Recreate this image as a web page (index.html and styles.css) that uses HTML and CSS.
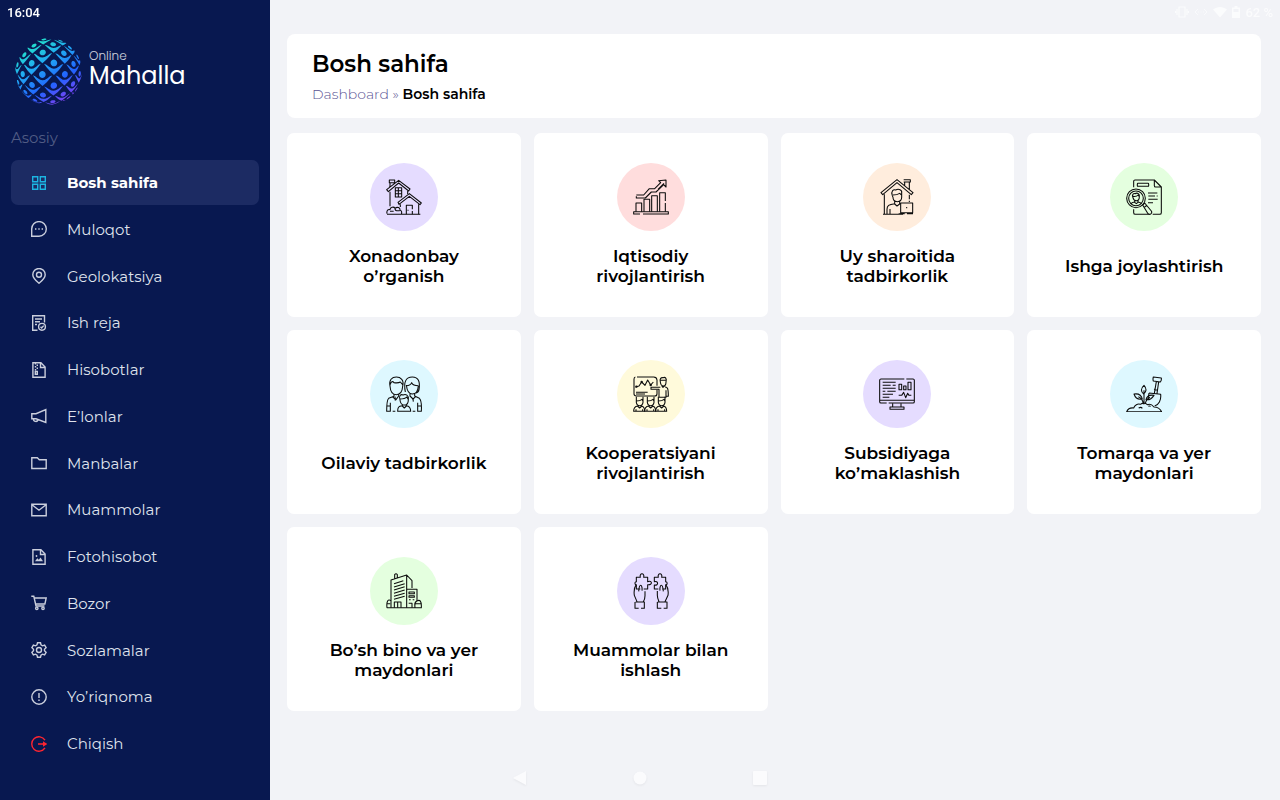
FILE: index.html
```html
<!DOCTYPE html>
<html lang="uz">
<head>
<meta charset="utf-8">
<meta name="viewport" content="width=device-width, initial-scale=1.0">
<title>Online Mahalla</title>
<link rel="stylesheet" href="styles.css">
</head>
<body>
<div class="status-bar">
  <span class="clock">16:04</span>
  <div class="status-icons">
    <svg width="14" height="12" viewBox="0 0 14 12"><path d="M4 1h6v10H4zM2 3v6M12 3v6M.5 5v2M13.500 5v2" fill="none" stroke="currentColor" stroke-width="1.200"/></svg>
    <svg class="faint" width="14" height="12" viewBox="0 0 14 12"><path d="M4 3 1 6l3 3M10 3l3 3-3 3M4 6h1M6.500 6h1M9 6h1" fill="none" stroke="currentColor"/></svg>
    <svg width="14" height="12" viewBox="0 0 14 12"><path d="M0 3.500C4 0 10 0 14 3.500L7 11.500z" fill="currentColor"/></svg>
    <svg width="8" height="12" viewBox="0 0 8 12"><path d="M2.500 0h3v1.500H8V12H0V1.500h2.500zM1.500 3v3h5V3z" fill="currentColor" fill-rule="evenodd"/></svg>
    <span>62 %</span>
  </div>
</div>

<div class="layout">
  <aside class="sidebar">
    <a class="logo" href="#">
      <svg class="globe" viewBox="-33 -33 66 66" aria-hidden="true">
        <defs>
          <linearGradient id="globeFill" x1="-18" y1="-28" x2="18" y2="29" gradientUnits="userSpaceOnUse">
            <stop offset="0" stop-color="#22e3c9"/>
            <stop offset=".35" stop-color="#20a8f4"/>
            <stop offset=".68" stop-color="#2263ff"/>
            <stop offset="1" stop-color="#8040f0"/>
          </linearGradient>
        </defs>
        <path id="globePattern" fill="url(#globeFill)"/>
      </svg>
      <span class="logo-text"><span class="logo-small">Online</span><span class="logo-big">Mahalla</span></span>
    </a>
    <p class="menu-title">Asosiy</p>
    <nav class="menu">
      <a class="menu-item active" href="#">
        <svg viewBox="0 0 16 16"><path d="M1.700 1.700h5v5h-5zM9.300 1.700h5v5h-5zM1.700 9.300h5v5h-5zM9.300 9.300h5v5h-5z"/></svg>
        Bosh sahifa</a>
      <a class="menu-item" href="#">
        <svg viewBox="0 0 16 16"><path d="M.7 15.200V8A7.300 7.300 0 1 1 8 15.200z"/><path d="M4 8h1.400M7.300 8h1.400M10.600 8H12" stroke-width="1.500"/></svg>
        Muloqot</a>
      <a class="menu-item" href="#">
        <svg viewBox="0 0 16 16"><path d="M8 15.300C4 12 1.800 9.400 1.800 6.700a6.200 6.200 0 0 1 12.400 0C14.200 9.400 12 12 8 15.300z"/><circle cx="8" cy="6.700" r="2.500"/></svg>
        Geolokatsiya</a>
      <a class="menu-item" href="#">
        <svg viewBox="0 0 16 16"><path d="M6.500 15.200H1.700V.8h11.800v6.700M4 4h7M4 6.800h5M4 9.500h2"/><circle cx="11" cy="11.800" r="3.400"/><path d="m9.500 11.800 1.200 1.200 2-2.400"/></svg>
        Ish reja</a>
      <a class="menu-item" href="#">
        <svg viewBox="0 0 16 16"><path d="M1.900.8h8l4.200 4.300v10.100H1.900zM9.500.8v4.700h4.600"/><path d="M4.500 1v1.500M6.300 2.500V4M4.500 4v1.500M6.300 5.500V7M4.500 7v1.500M4.300 9.500h2v2.800h-2z"/></svg>
        Hisobotlar</a>
      <a class="menu-item" href="#">
        <svg viewBox="0 0 16 16"><path d="M14.800 1.500v13L5 10.800H.8V5.700H5zM2.500 11a2.300 2.300 0 0 0 4.500.8"/></svg>
        E’lonlar</a>
      <a class="menu-item" href="#">
        <svg viewBox="0 0 16 16"><path d="M.8 2.800h5.500l2 2h6.900v8.700H.8z"/></svg>
        Manbalar</a>
      <a class="menu-item" href="#">
        <svg viewBox="0 0 16 16"><path d="M.8 2.300h14.400v11.500H.8zM1 2.700l7 5.500 7-5.500"/></svg>
        Muammolar</a>
      <a class="menu-item" href="#">
        <svg viewBox="0 0 16 16"><path d="M1.900.8h8l4.200 4.300v10.100H1.900zM9.500.8v4.700h4.600"/><path d="m4 12.200 2.300-3 1.500 1.500L9.500 8.500l2.500 3.700z" fill="currentColor" stroke="none"/><circle cx="5.500" cy="7" r=".9" fill="currentColor" stroke="none"/></svg>
        Fotohisobot</a>
      <a class="menu-item" href="#">
        <svg viewBox="0 0 16 16"><path d="M.3 1.300h2.500L5 11h8.500M3.300 3h11.900l-1.300 6H4.600"/><circle cx="5.800" cy="13.300" r="1.200"/><circle cx="12" cy="13.300" r="1.200"/></svg>
        Bozor</a>
      <a class="menu-item" href="#">
        <svg viewBox="0 0 16 16"><path d="M6.500.8h3l.5 2.100 1.500.9 2.100-.7 1.500 2.600L13.500 7.200v1.600l1.600 1.500-1.500 2.600-2.100-.7-1.500.9-.5 2.100h-3L6 13.100l-1.500-.9-2.100.7-1.500-2.600 1.600-1.500V7.200L.9 5.700l1.500-2.600 2.100.7L6 2.900z"/><circle cx="8" cy="8" r="2.500"/></svg>
        Sozlamalar</a>
      <a class="menu-item" href="#">
        <svg viewBox="0 0 16 16"><circle cx="8" cy="8" r="7.200"/><path d="M8 4v5M8 10.600v1.400" stroke-width="1.400"/></svg>
        Yo’riqnoma</a>
      <a class="menu-item exit" href="#">
        <svg viewBox="0 0 16 16"><path d="M14 4.100a7.200 7.200 0 1 0 0 7.800M7 8h7.500M12.700 6.500 15 8l-2.300 1.500z"/></svg>
        Chiqish</a>
    </nav>
  </aside>

  <main class="content">
    <header class="page-header">
      <h1>Bosh sahifa</h1>
      <div class="breadcrumb"><a href="#">Dashboard</a> <span class="sep">»</span> <strong>Bosh sahifa</strong></div>
    </header>

    <div class="cards">
      <a class="card" href="#">
        <span class="icon purple"><svg viewBox="0 0 108 108">
          <path d="M2 32 38 4l34 26-4 6-30-24L7 38zM12 25V11h12v5M10 3h16v8H10zM12 38v44M65 36v9"/>
          <path d="M28 26h19v28H28zM37 26v28M28 35h19M28 44h19"/>
          <path d="m36 70 34-26 36 28-4 5-32-25-31 24zM98 76v30M61 106V79h18v12M79 96v10M66 92v3M43 76v8"/>
          <path d="M3 106h100M3 104c-2-10 4-14 9-12 0-8 12-10 15-4 7-6 16-2 15 6 5 0 6 7 4 12M12 97h11M27 88c0 4 2 7 5 7h9"/>
        </svg></span>
        <span class="card-title">Xonadonbay<br>o’rganish</span>
      </a>
      <a class="card" href="#">
        <span class="icon red"><svg viewBox="0 0 108 108">
          <path d="M10 48h22l17-19h16l18-18-6-6 22-2v21l-7-7-23 22H55L37 57H10v-5M93 13 75 31"/>
          <path d="M9 98V72h17v26M33 98V61h17v37M56 98V50h17v48M80 98V41h17v25M97 72v26"/>
          <path d="M21 105H2v-7h104v7H30"/>
        </svg></span>
        <span class="card-title">Iqtisodiy<br>rivojlantirish</span>
      </a>
      <a class="card" href="#">
        <span class="icon orange"><svg viewBox="0 0 108 108">
          <path d="M6 41 54 2l48 39-5 6-43-36-43 36zM77 20V9h14v22M74 2h20v7H74M16 46v59M91 47v14M91 65v4"/>
          <path d="M40 50c-5-14 4-20 10-17 9-5 20 0 18 9v13c0 8-6 13-13 13s-13-5-13-13zM42 48c11 0 17-3 20-5l6 5M47 66v9l7 6 8-6v-8M47 74c-18 2-23 6-23 17v14M62 74h4"/>
          <path d="M65 72h36v29H65zM83 84v4M59 104h18M84 104h18M12 106h60M33 90v15"/>
        </svg></span>
        <span class="card-title">Uy sharoitida<br>tadbirkorlik</span>
      </a>
      <a class="card" href="#">
        <span class="icon green"><svg viewBox="0 0 108 108">
          <path d="M23 25V7q0-4 4-4h58l21 21v77q0 5-5 5H80M23 91v10q0 5 5 5h42M85 3v17q0 4 4 4h16"/>
          <rect x="34" y="13" width="34" height="9" rx="2"/><path d="M66 42h28M67 51h20M92 51h3M67 61h28M66 71h15"/>
          <circle cx="30" cy="58" r="28"/><circle cx="30" cy="58" r="22"/>
          <path d="M21 56c-5-10 2-13 6-12 7-4 15 0 13 10 0 7-3 11-9 11s-9-3-10-9zM21 52c9 1 13-1 15-4l4 5M26 65v5l5 4 5-4v-5M26 69c-7 1-10 3-11 6M36 69c6 1 9 3 10 5"/>
          <path d="m50 78 6-6 20 24c4 7-4 13-10 8zM56 84l6-5"/>
        </svg></span>
        <span class="card-title">Ishga joylashtirish</span>
      </a>
      <a class="card" href="#">
        <span class="icon blue"><svg viewBox="0 0 108 108">
          <path d="M12 30C8 12 18 3 31 3s24 9 19 28c-1 16-8 25-19 25S13 46 12 30zM13 25c2-9 7-10 11-5 7 1 16 0 19-2l7 8"/>
          <path d="M58 48C52 17 60 3 79 3c18 0 24 13 20 38-1 6-4 9-9 10M61 27c2 19 8 27 18 27 11 0 17-10 18-25M61 29c8 0 14-4 16-9 3 7 11 9 20 9"/>
          <path d="M24 54v7L8 67c-5 4-6 21-6 39h11V80M38 54v6l-8 11-10-8M13 90H3M86 54v6l14 7c6 5 7 22 6 39H95V80M95 90h11M72 54v6l9 9 8-7"/>
          <path d="M42 72c-5-13 3-18 9-15 8-4 18 0 16 14 0 10-5 16-12 16s-12-5-13-15zM41 69c10 0 18-2 21-6l5 7M49 85v5l6 6 6-6v-5M49 89c-12 1-14 6-14 17h39c0-12-4-16-13-17M20 106h8M80 106h8M27 62l1 12M81 69l1 8"/>
        </svg></span>
        <span class="card-title">Oilaviy tadbirkorlik</span>
      </a>
      <a class="card" href="#">
        <span class="icon yellow"><svg viewBox="0 0 108 108">
          <path d="M12 3h50q9 0 10 9v17M72 41v12q0 7-7 7H10q-7 0-7-7V10q0-6 4-7M9 49h35M9 54h27"/>
          <path d="m10 32 8-2 8-12 10 10 8-16 9 15 8-9"/><circle cx="10" cy="32" r="2"/><circle cx="26" cy="18" r="2"/><circle cx="53" cy="27" r="2"/>
          <path d="M82 18c-3-11 3-14 8-13 7-3 12 2 9 13 0 8-4 12-8 12s-8-4-9-12zM83 13h15M86 29l4 5 6-5M82 34H54v6h24v24h21V43M96 33c8 0 10 5 10 28h-7"/>
          <g id="listener"><path d="M10 62v17c1 6 5 10 10 10s9-4 10-10V62M10 75c10 0 14-2 17-5l3 6M15 87v5l5 4 5-4v-5M14 90c-9 1-12 7-12 16h33c0-9-2-15-10-16M9 100v6M29 100v6"/></g>
          <use href="#listener" x="33"/><use href="#listener" x="66"/>
        </svg></span>
        <span class="card-title">Kooperatsiyani<br>rivojlantirish</span>
      </a>
      <a class="card" href="#">
        <span class="icon purple"><svg viewBox="0 0 108 108">
          <path d="M76 9H6q-4 0-4 4v64q0 4 4 4h17M29 81h73q4 0 4-4V13q0-4-4-4H82M2 73h104"/>
          <path d="M41 82v11M66 82v11M33 93h42v7H33zM48 93h7"/>
          <path d="M11 19h39M11 28h24M41 28h9M11 37h39M11 46h8M25 46h25M11 55h31M11 64h20"/>
          <path d="M60 25h8v16h-8zM74 30h7v11h-7zM87 19h9v22h-9zM59 58h9l6-9 6 16 6-13 4 6h7"/>
        </svg></span>
        <span class="card-title">Subsidiyaga<br>ko’maklashish</span>
      </a>
      <a class="card" href="#">
        <span class="icon blue"><svg viewBox="0 0 108 108">
          <path d="M82 3q-2 7 0 12l21 3q4-5 3-12zM91 17l-6 35M98 18l-5 34M84 40l9 2M69 51l35 4c2 18-6 32-18 35M69 51l-3 20"/>
          <path d="M54 28c-10 9-10 19-1 26 9-8 9-17 1-26zM54 43v42M24 54c5 15 16 17 25 15-3-13-12-17-25-15zM37 62c10 4 14 9 15 23M84 58c-8 12-15 15-24 13 3-12 12-15 24-13zM72 64c-9 5-13 10-14 20"/>
          <path d="M2 107c5-11 14-12 21-11 3-9 12-14 20-11 8-5 16-4 21 1 8-3 15 1 20 7 10 0 17 3 23 14H2zM38 96c5-3 9-2 11 1M67 91q4-2 7 0"/>
        </svg></span>
        <span class="card-title">Tomarqa va yer<br>maydonlari</span>
      </a>
      <a class="card" href="#">
        <span class="icon green"><svg viewBox="0 0 108 108">
          <path d="M15 104V21l47-15v98M62 6l16 17v22M26 17V5q4-5 8 0v9M24 32l28-9M24 42l32-10M24 51l32-10M24 61l32-10M24 70l32-9M24 79l32-9"/>
          <path d="M62 49h31v34M69 57h16v5H69zM69 68h16v5H69zM69 80h5M80 80h5M68 91h10v13M25 104V87h20v17M35 87v17"/>
          <path d="M15 83C5 76 1 88 3 104h103c1-21-4-25-14-20-7 5-6 9-5 20M3 92h10M88 92h17"/>
        </svg></span>
        <span class="card-title">Bo’sh bino va yer<br>maydonlari</span>
      </a>
      <a class="card" href="#">
        <span class="icon purple"><svg viewBox="0 0 108 108">
          <path d="M22 48H10V36c-5 0-6-10 0-10V13h12c-4-14 14-14 10 0h12v13c14-5 16 11 0 9v13H32"/>
          <path d="M10 34C3 44 2 53 4 67l8 19M17 55c1-11 3-18 6-18s5 7 4 16M36 55v13c0 8-2 13-5 18M8 87h26v19H24M17 106H6V87"/>
          <path d="M76 48H64V36c14 3 12-14 0-10V13h12c-4-14 14-14 10 0h12v13c6 0 6 10 0 10v12H88"/>
          <path d="M98 34c8 10 9 19 7 33l-9 19M91 55c-1-11-3-18-6-18s-5 7-4 16M73 54v13c0 8 2 13 5 19M74 87h28v19H92M85 106H73V87"/>
        </svg></span>
        <span class="card-title">Muammolar bilan<br>ishlash</span>
      </a>
    </div>
  </main>
</div>

<div class="system-nav">
  <button type="button" aria-label="Orqaga"><svg viewBox="0 0 16 16"><path d="M1 8 14 1v14z"/></svg></button>
  <button type="button" aria-label="Asosiy ekran"><svg viewBox="0 0 16 16"><circle cx="8" cy="8" r="6.500"/></svg></button>
  <button type="button" aria-label="Ilovalar"><svg viewBox="0 0 16 16"><rect x="1" y="1" width="14" height="14" rx="1"/></svg></button>
</div>
<script src="script.js"></script>
</body>
</html>
```

FILE: styles.css
```css
* {
  box-sizing: border-box;
}
:root {
  --navy: #081850;
  --page: #f2f3f7;
}
body {
  margin: 0;
  background: var(--page);
  color: #000;
  font-family: Montserrat, Inter, "Open Sans", sans-serif;
}
a {
  color: inherit;
  text-decoration: none;
}

/* system bars lie over the page */
.status-bar {
  position: fixed;
  top: 0;
  left: 0;
  right: 0;
  z-index: 10;
  display: flex;
  justify-content: space-between;
  align-items: center;
  height: 24px;
  padding: 0 7px;
  color: #fff;
  font-family: Roboto, sans-serif;
  font-size: 13px;
  font-weight: 500;
}
.status-icons {
  display: flex;
  align-items: center;
  gap: 5px;
  opacity: 0.7;
}
.faint {
  opacity: 0.8;
}
.system-nav {
  position: fixed;
  left: 0;
  right: 0;
  bottom: 0;
  display: flex;
  justify-content: center;
  gap: 88px;
  height: 38px;
  pointer-events: none;
}
.system-nav button {
  width: 32px;
  height: 32px;
  padding: 8px;
  border: 0;
  background: none;
  pointer-events: auto;
}
.system-nav svg {
  display: block;
  width: 16px;
  height: 16px;
  fill: #fbfbfd;
  filter: drop-shadow(0 1px 1px rgba(0, 0, 0, 0.06));
}

.layout {
  display: flex;
  min-height: 100vh;
}

/* sidebar */
.sidebar {
  display: flex;
  flex-direction: column;
  flex: 0 0 270px;
  padding: 38px 11px 34px;
  background: var(--navy);
  color: #dfe2ec;
}
.logo {
  display: flex;
  align-items: center;
  gap: 7px;
  padding-left: 4px;
}
.globe {
  width: 67px;
  height: 67px;
}
.logo-text {
  display: flex;
  flex-direction: column;
  padding-bottom: 5px;
  color: #fff;
  font-family: Poppins, Montserrat, sans-serif;
}
.logo-small {
  font-size: 12px;
  font-weight: 300;
  line-height: 14px;
  opacity: 0.8;
}
.logo-big {
  font-size: 24px;
  font-weight: 400;
  line-height: 26px;
}
.menu-title {
  margin: 23px 0 12px;
  color: #515c84;
  font-size: 15px;
  line-height: 20px;
}
.menu {
  display: flex;
  flex: 1;
  flex-direction: column;
  justify-content: space-between;
}
.menu-item {
  display: flex;
  align-items: center;
  gap: 20px;
  height: 45px;
  padding: 0 20px;
  border-radius: 7px;
  font-size: 15px;
}
.menu-item svg {
  width: 16px;
  height: 16px;
  fill: none;
  stroke: currentColor;
  stroke-width: 1.4;
  opacity: 0.9;
}
.menu-item.active {
  background: #1c2b63;
  color: #fff;
  font-weight: 700;
}
.menu-item.active svg {
  color: #1cc4f0;
}
.menu-item.exit svg {
  color: #ff2530;
  opacity: 1;
}

/* content */
.content {
  flex: 1;
  min-width: 0;
  padding: 34px 19px 60px 17px;
}
.page-header {
  padding: 14px 25px;
  border-radius: 8px;
  background: #fff;
}
h1 {
  margin: 0;
  font-size: 23px;
  font-weight: 600;
  line-height: 32px;
}
.breadcrumb {
  margin-top: 4px;
  font-size: 14px;
  line-height: 20px;
}
.breadcrumb a,
.sep {
  color: #5a5494;
  font-weight: 300;
}
.breadcrumb strong {
  font-weight: 600;
}
.cards {
  display: grid;
  grid-template-columns: repeat(4, 1fr);
  gap: 13px;
  margin-top: 15px;
}
.card {
  display: flex;
  flex-direction: column;
  align-items: center;
  gap: 15px;
  padding: 30px 10px 31px;
  border-radius: 7px;
  background: #fff;
}
.icon {
  display: flex;
  align-items: center;
  justify-content: center;
  width: 68px;
  height: 68px;
  border-radius: 50%;
}
.icon svg {
  width: 36px;
  height: 36px;
  fill: none;
  stroke: #0c0c0c;
  stroke-width: 3.2;
  stroke-linejoin: round;
}
.purple { background: #e5dcff; }
.red { background: #ffdddd; }
.orange { background: #ffeddd; }
.green { background: #e4ffdf; }
.blue { background: #def8ff; }
.yellow { background: #fffadb; }
.card-title {
  display: flex;
  align-items: center;
  min-height: 40px;
  font-size: 17px;
  font-weight: 600;
  line-height: 20px;
  text-align: center;
}
```

FILE: script.js
```js
// globe logo: a lattice of little people bent over a sphere
const R = 33;
const STEP = 0.35;

function project(x, y) {
  const d = Math.hypot(x, y);
  if (d === 0) return [0, 0];
  const r = R * Math.sin(Math.min(d, Math.PI / 2)) / d;
  return [x * r, y * r];
}

function curve(points) {
  return 'M' + points.map(p => project(p[0], p[1]).map(n => n.toFixed(2)).join(' ')).join('L') + 'Z';
}

function person(cx, cy) {
  const head = [];
  for (let i = 0; i < 20; i++) {
    const a = i / 20 * Math.PI * 2;
    head.push([cx + Math.cos(a) * 0.29 * STEP, cy + (Math.sin(a) * 0.3 - 0.06) * STEP]);
  }
  const body = [[-0.86, 0.02], [-0.65, 0.1], [-0.45, 0.26], [-0.2, 0.41], [0, 0.44],
    [0.2, 0.41], [0.45, 0.26], [0.65, 0.1], [0.86, 0.02], [0.62, 0.34], [0.38, 0.62], [0, 0.98],
    [-0.38, 0.62], [-0.62, 0.34]].map(p => [cx + p[0] * STEP, cy + p[1] * STEP]);
  return curve(head) + curve(body);
}

let d = '';
for (let row = -6; row <= 6; row++) {
  for (let col = -6; col <= 6; col++) {
    if ((row + col) % 2 !== 0) continue;
    const x = (col + 0.47) * STEP;
    const y = row * STEP - 0.24;
    if (Math.hypot(x, y) < 1.5) d += person(x, y);
  }
}
document.getElementById('globePattern').setAttribute('d', d);
```
